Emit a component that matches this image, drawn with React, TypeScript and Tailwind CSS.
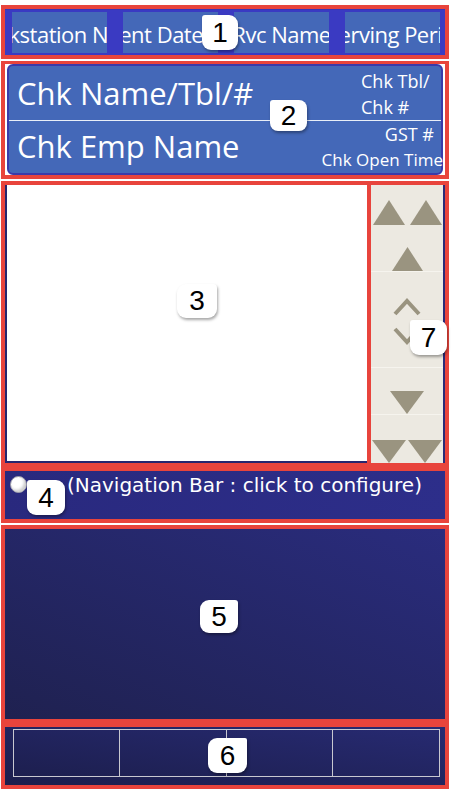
import type { ReactNode } from 'react';

const RED = 'border-[#e8443c]';

function Badge({ n, className }: { n: string; className: string }) {
  return (
    <div
      className={`absolute flex items-center justify-center bg-white text-black text-[28px] leading-none shadow-[1px_2px_3px_rgba(0,0,0,0.35)] ${className}`}
      style={{ fontFamily: '"Liberation Sans", Arial, sans-serif' }}
    >
      {n}
    </div>
  );
}

function Tab({ label, shift = 0 }: { label: string; shift?: number }) {
  return (
    <div className="w-[95px] h-[41px] bg-[#4468b8] overflow-hidden flex items-center justify-center pt-[3px]">
      <span
        className="whitespace-nowrap text-white text-[22px] leading-none tracking-[-0.5px]"
        style={{ transform: `translateX(${shift}px)` }}
      >
        {label}
      </span>
    </div>
  );
}

function Tri({ up, w = 32, h = 25 }: { up: boolean; w?: number; h?: number }) {
  return (
    <svg width={w} height={h} viewBox={`0 0 ${w} ${h}`}>
      <polygon points={up ? `0,${h} ${w / 2},0 ${w},${h}` : `0,0 ${w},0 ${w / 2},${h}`} fill="#9a9480" />
    </svg>
  );
}

function Chevron({ up }: { up: boolean }) {
  return (
    <svg width="28" height="20" viewBox="0 0 28 20">
      <polyline
        points={up ? '2,17 14,4 26,17' : '2,3 14,16 26,3'}
        fill="none"
        stroke="#9a9480"
        strokeWidth="4"
      />
    </svg>
  );
}

function Section({ className, children }: { className: string; children?: ReactNode }) {
  return <div className={`ml-[1px] w-[448px] border-4 ${RED} ${className}`}>{children}</div>;
}

export default function App() {
  return (
    <div
      className="relative w-[454px] h-[794px] bg-white overflow-hidden"
      style={{ fontFamily: '"Open Sans", "Noto Sans", sans-serif' }}
    >
      <div className="pt-[5px]">
        {/* 1: info tabs */}
        <Section className="h-[54px]">
          <div className="h-full bg-[#3a3ac2] flex items-center gap-[16px] pl-[7px] border-t border-[#3535b8]">
            <Tab label="Workstation Name" />
            <Tab label="Current Date" shift={-31} />
            <Tab label="Rvc Name" />
            <Tab label="Serving Period" shift={5} />
          </div>
        </Section>

        {/* 2: check header */}
        <Section className="mt-[2px] h-[118px] border-t-[3px] px-[2px] py-0">
          <div className="h-[111px] rounded-[6px] bg-[#4468b8] border-2 border-[#3a3aaa] text-white flex flex-col">
            <div className="h-[54px] flex items-center justify-between pl-[8px] pr-[4px]">
              <span className="text-[31px] leading-none">Chk Name/Tbl/#</span>
              <div className="w-[76px] text-[18px] leading-[26px] pt-[2px]">
                <div>Chk Tbl/</div>
                <div>Chk #</div>
              </div>
            </div>
            <div className="h-[2px] bg-[#e8eef8]" />
            <div className="flex-1 flex items-center justify-between pl-[8px] pr-0">
              <span className="text-[31px] leading-none pb-[2px]">Chk Emp Name</span>
              <div className="text-right leading-[26px]">
                <div className="text-[18px] pr-[7px]">GST #</div>
                <div className="text-[17px] whitespace-nowrap -mr-[2px]">Chk Open Time</div>
              </div>
            </div>
          </div>
        </Section>

        {/* 3 + 7: check detail and scroll bar */}
        <div className="mt-[2px] ml-[1px] w-[448px] h-[286px] flex">
          <div className={`w-[370px] h-full border-4 ${RED}`}>
            <div className="h-full bg-white border-l-2 border-b-2 border-[#26266e]" />
          </div>
          <div className={`flex-1 h-full border-4 border-l-0 ${RED}`}>
            <div className="h-full bg-[#ece9e1] border-r-2 border-[#2a2a78] flex flex-col">
              <div className="h-[51px] flex items-end justify-center gap-[5px] pb-[11px]">
                <Tri up />
                <Tri up />
              </div>
              <div className="h-[36px] flex items-end justify-center border-b border-[#f6f4ee]">
                <Tri up w={31} h={24} />
              </div>
              <div className="h-[96px] flex flex-col items-center pt-[25px] gap-[9px] border-b border-[#f6f4ee]">
                <Chevron up />
                <Chevron up={false} />
              </div>
              <div className="h-[47px] flex items-end justify-center border-b border-[#f6f4ee]">
                <Tri up={false} w={34} h={23} />
              </div>
              <div className="flex-1 flex items-end justify-center gap-[2px]">
                <Tri up={false} w={34} h={23} />
                <Tri up={false} w={34} h={23} />
              </div>
            </div>
          </div>
        </div>

        {/* 4: navigation bar */}
        <Section className="mt-0 h-[56px]">
          <div
            className="h-full bg-linear-to-r from-[#29297e] to-[#2d2e8a] flex items-start pl-[5px] pt-[2px] text-white"
            style={{ fontFamily: '"DejaVu Sans", Verdana, sans-serif' }}
          >
            <span className="mt-[3px] w-[17px] h-[17px] rounded-full bg-white border border-[#9a9aa8] shadow-[inset_-2px_-2px_3px_rgba(0,0,0,0.2)]" />
            <span className="ml-[40px] text-[20px] leading-[24px] whitespace-nowrap">
              (Navigation Bar : click to configure)
            </span>
          </div>
        </Section>

        {/* 5: main panel */}
        <Section className="mt-[2px] h-[198px]">
          <div className="h-full bg-linear-to-tr from-[#1f2150] to-[#2a2c7e]" />
        </Section>

        {/* 6: function bar */}
        <Section className="mt-0 h-[66px]">
          <div className="h-full bg-linear-to-tr from-[#1c1e4c] to-[#272a72] pl-[8px] pr-[5px] pt-[2px]">
            <div className="h-[48px] grid grid-cols-4 border-[1.5px] border-[#c8c8d0]">
              <div className="border-r-[1.5px] border-[#c8c8d0]" />
              <div className="border-r-[1.5px] border-[#c8c8d0]" />
              <div className="border-r-[1.5px] border-[#c8c8d0]" />
              <div />
            </div>
          </div>
        </Section>
      </div>

      <Badge n="1" className="left-[202px] top-[15px] w-[36px] h-[35px] rounded-[9px] rounded-tl-[3px]" />
      <Badge n="2" className="left-[270px] top-[100px] w-[37px] h-[31px] rounded-[8px] rounded-tl-[3px]" />
      <Badge n="3" className="left-[177px] top-[284px] w-[40px] h-[34px] rounded-[9px] rounded-tr-[4px]" />
      <Badge n="4" className="left-[27px] top-[480px] w-[38px] h-[35px] rounded-[9px] rounded-tl-[3px]" />
      <Badge n="5" className="left-[200px] top-[600px] w-[38px] h-[33px] rounded-[9px] rounded-tr-[3px]" />
      <Badge n="6" className="left-[208px] top-[738px] w-[39px] h-[35px] rounded-[9px] rounded-tr-[2px]" />
      <Badge n="7" className="left-[410px] top-[320px] w-[37px] h-[35px] rounded-[9px] rounded-tl-[3px]" />
    </div>
  );
}
